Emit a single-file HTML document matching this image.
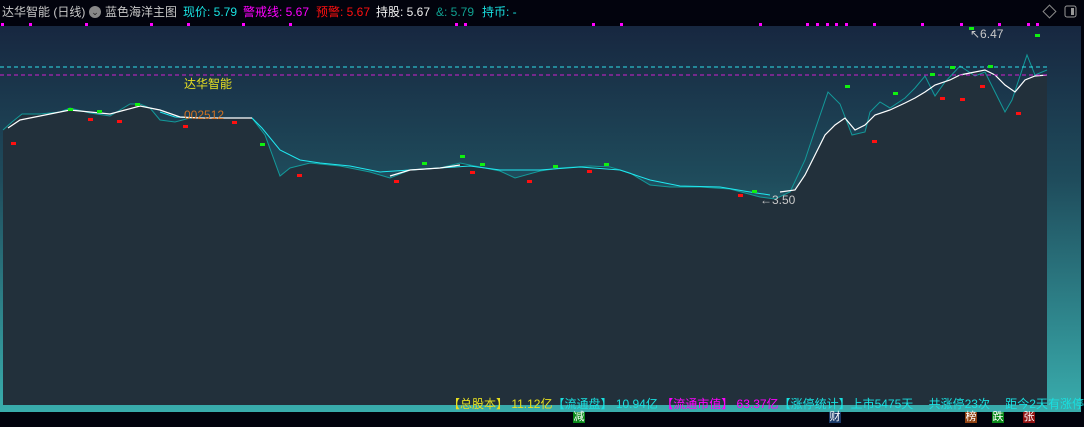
<!DOCTYPE html>
<html><head><meta charset="utf-8"><style>
html,body{margin:0;padding:0;background:#02030d;width:1084px;height:427px;overflow:hidden;font-family:"Liberation Sans","Noto Sans CJK SC",sans-serif}
#top{position:absolute;left:0;top:0;height:24px;width:1084px;font-size:12px;line-height:24px;white-space:nowrap}
#top span{position:absolute;top:0}
svg{position:absolute;left:0;top:0}
#bot{position:absolute;left:448px;top:397px;font-size:12px;line-height:14px;white-space:nowrap;color:#19e0e0}
.b{position:absolute;top:412px;width:12px;height:11px;font-size:11px;line-height:11px;color:#fff;text-align:center}
</style></head><body>
<svg width="1084" height="427">
<defs><linearGradient id="g" x1="0" y1="0" x2="0" y2="1">
<stop offset="0" stop-color="#172740"/><stop offset="0.4" stop-color="#1f4c5c"/><stop offset="1" stop-color="#39adad"/></linearGradient></defs>
<rect x="0" y="26" width="1081" height="386" fill="url(#g)"/>
<polygon fill="#22303b" points="3,405 3,130 12,122 22,114 40,114 60,112 70,108 90,113 110,116 120,110 130,104 140,104 150,108 160,120 175,122 190,118 210,118 230,118 252,118 265,135 280,176 290,168 310,163 340,166 370,172 390,178 410,170 440,168 460,163 480,167 500,171 515,178 540,171 560,168 590,166 610,167 630,173 650,185 670,187 700,187 730,189 760,197 775,199 790,192 795,190 805,175 815,155 825,135 835,125 845,118 852,135 865,132 870,120 875,115 890,110 905,103 915,98 925,92 935,96 945,82 960,75 975,72 985,72 995,92 1005,112 1012,100 1025,80 1035,76 1047,75 1047,405"/>
<polyline fill="none" stroke="#139a9a" stroke-width="1" points="3,130 12,122 22,114 40,114 60,112 70,108 90,113 110,116 120,110 130,104 140,104 150,108 160,120 175,122 190,118 210,118 230,118 252,118 265,135 280,176 290,168 310,163 340,166 370,172 390,178 410,170 440,168 460,163 480,167 500,171 515,178 540,171 560,168 590,166 610,167 630,173 650,185 670,187 700,187 730,189 760,197 775,199 790,192 805,160 815,130 828,92 840,104 852,135 865,132 870,112 880,102 890,108 905,98 915,88 925,76 935,96 945,82 960,66 975,76 985,72 995,92 1005,112 1012,100 1027,55 1035,75 1047,70"/>
<polyline fill="none" stroke="#20e8f0" stroke-width="1" points="160,112 175,117 200,118 252,118 262,128 280,150 300,160 320,163 350,166 380,172 410,170 440,168 470,166 500,170 540,170 580,167 620,170 650,180 680,186 720,187 750,192 770,195"/>
<path fill="none" stroke="#ffffff" stroke-width="1.2" d="M8,128 L20,120 40,116 60,112 70,110 90,112 110,114 125,110 140,106 160,110 180,117 200,118 230,118 252,118 M390,176 L410,170 440,168 460,165 M780,192 L795,190 805,175 815,155 825,135 835,125 845,118 855,130 865,125 875,115 890,110 905,103 915,98 925,92 935,85 950,80 960,75 975,72 985,70 995,75 1005,85 1015,92 1025,80 1035,76 1047,75"/>
<line x1="0" y1="67" x2="1047" y2="67" stroke="#2ee0e8" stroke-dasharray="4,3"/>
<line x1="0" y1="75" x2="1047" y2="75" stroke="#d020d0" stroke-dasharray="4,3"/>
<g fill="#10f010">
<rect x="68" y="108" width="5" height="3"/><rect x="97" y="110" width="5" height="3"/><rect x="135" y="103" width="5" height="3"/><rect x="260" y="143" width="5" height="3"/><rect x="422" y="162" width="5" height="3"/><rect x="460" y="155" width="5" height="3"/><rect x="480" y="163" width="5" height="3"/><rect x="553" y="165" width="5" height="3"/><rect x="604" y="163" width="5" height="3"/><rect x="752" y="190" width="5" height="3"/><rect x="845" y="85" width="5" height="3"/><rect x="893" y="92" width="5" height="3"/><rect x="930" y="73" width="5" height="3"/><rect x="950" y="66" width="5" height="3"/><rect x="988" y="65" width="5" height="3"/><rect x="1035" y="34" width="5" height="3"/><rect x="969" y="27" width="5" height="3"/></g>
<g fill="#ff1010">
<rect x="11" y="142" width="5" height="3"/><rect x="88" y="118" width="5" height="3"/><rect x="117" y="120" width="5" height="3"/><rect x="183" y="125" width="5" height="3"/><rect x="232" y="121" width="5" height="3"/><rect x="297" y="174" width="5" height="3"/><rect x="394" y="180" width="5" height="3"/><rect x="470" y="171" width="5" height="3"/><rect x="527" y="180" width="5" height="3"/><rect x="587" y="170" width="5" height="3"/><rect x="738" y="194" width="5" height="3"/><rect x="872" y="140" width="5" height="3"/><rect x="940" y="97" width="5" height="3"/><rect x="960" y="98" width="5" height="3"/><rect x="980" y="85" width="5" height="3"/><rect x="1016" y="112" width="5" height="3"/></g>
<g fill="#ff00ff">
<rect x="1" y="23" width="3" height="3"/><rect x="29" y="23" width="3" height="3"/><rect x="85" y="23" width="3" height="3"/><rect x="150" y="23" width="3" height="3"/><rect x="187" y="23" width="3" height="3"/><rect x="242" y="23" width="3" height="3"/><rect x="289" y="23" width="3" height="3"/><rect x="455" y="23" width="3" height="3"/><rect x="464" y="23" width="3" height="3"/><rect x="592" y="23" width="3" height="3"/><rect x="620" y="23" width="3" height="3"/><rect x="759" y="23" width="3" height="3"/><rect x="806" y="23" width="3" height="3"/><rect x="816" y="23" width="3" height="3"/><rect x="826" y="23" width="3" height="3"/><rect x="835" y="23" width="3" height="3"/><rect x="845" y="23" width="3" height="3"/><rect x="873" y="23" width="3" height="3"/><rect x="921" y="23" width="3" height="3"/><rect x="960" y="23" width="3" height="3"/><rect x="998" y="23" width="3" height="3"/><rect x="1027" y="23" width="3" height="3"/><rect x="1036" y="23" width="3" height="3"/></g>
<text x="184" y="88" fill="#e8e020" font-size="12" font-family="Liberation Sans,Noto Sans CJK SC,sans-serif">达华智能</text>
<text x="184" y="119" fill="#d07020" font-size="12" font-family="Liberation Sans,sans-serif">002512</text>
<text x="760" y="204" fill="#c8c8c8" font-size="12" font-family="Liberation Sans,sans-serif">←3.50</text>
<text x="970" y="38" fill="#c8c8c8" font-size="12" font-family="Liberation Sans,sans-serif">↖6.47</text>
<rect x="1045" y="7" width="9" height="9" fill="none" stroke="#888" transform="rotate(45 1049.5 11.5)"/>
<rect x="1065" y="6" width="11" height="11" rx="2" fill="none" stroke="#999"/><rect x="1071" y="8" width="3" height="7" fill="#999"/>
<rect x="1081" y="26" width="3" height="386" fill="#02030d"/>
</svg>
<div id="top">
<span style="left:2px;color:#c8c8c8">达华智能 (日线)</span>
<span style="left:89px;top:6px;width:12px;height:12px;border-radius:6px;background:#888;color:#222;font-size:9px;line-height:12px;text-align:center">⌄</span>
<span style="left:105px;color:#c8c8c8">蓝色海洋主图</span>
<span style="left:183px;color:#19e0e0">现价: 5.79</span>
<span style="left:243px;color:#ff00ff">警戒线: 5.67</span>
<span style="left:316px;color:#ff1010">预警: 5.67</span>
<span style="left:376px;color:#f0f0f0">持股: 5.67</span>
<span style="left:436px;color:#10a090">&amp;: 5.79</span>
<span style="left:482px;color:#19e0e0">持币: -</span>
</div>
<div id="bot"><span style="color:#e8e020">【总股本】 11.12亿</span>【流通盘】 10.94亿 <span style="color:#ff00ff">【流通市值】 63.37亿</span>【涨停统计】上市5475天　 共涨停23次 　距今2天有涨停</div>
<div class="b" style="left:573px;background:#0a8a1a">减</div>
<div class="b" style="left:829px;background:#1a3a6a">财</div>
<div class="b" style="left:965px;background:#904010">榜</div>
<div class="b" style="left:992px;background:#0a8a1a">跌</div>
<div class="b" style="left:1023px;background:#901010">张</div>
</body></html>
